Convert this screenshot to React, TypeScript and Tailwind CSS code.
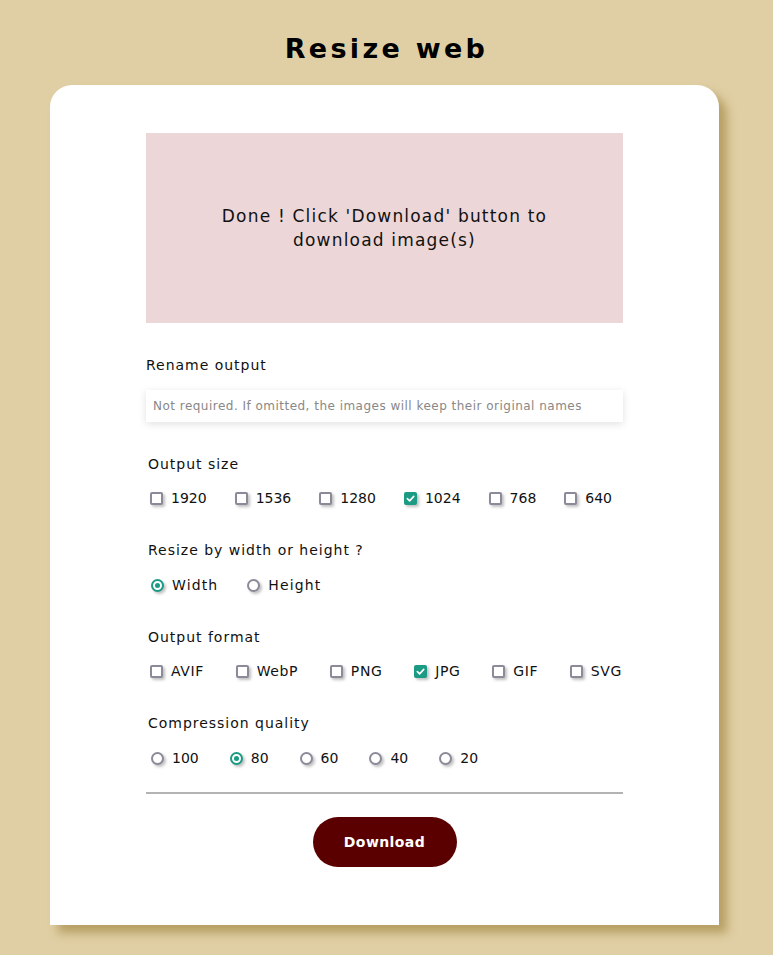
import { useState } from "react";

const sizes = ["1920", "1536", "1280", "1024", "768", "640"];
const formats = ["AVIF", "WebP", "PNG", "JPG", "GIF", "SVG"];
const qualities = ["100", "80", "60", "40", "20"];

function Box({ checked, label }: { checked: boolean; label: string }) {
  return (
    <label className="flex items-center gap-[8px] cursor-pointer">
      {checked ? (
        <span className="w-[13px] h-[13px] rounded-[2px] bg-[#1b9a84] flex items-center justify-center shadow-[2px_2px_3px_rgba(0,0,0,0.25)]">
          <svg width="9" height="9" viewBox="0 0 10 10" fill="none">
            <path d="M1.5 5.2 L4 7.6 L8.6 2.6" stroke="white" strokeWidth="1.8" strokeLinecap="round" strokeLinejoin="round" />
          </svg>
        </span>
      ) : (
        <span className="w-[13px] h-[13px] rounded-[2px] border-2 border-[#8c8a99] bg-white shadow-[2px_2px_3px_rgba(0,0,0,0.25)]" />
      )}
      <span className="text-[14px] leading-[20px] text-[#111]">{label}</span>
    </label>
  );
}

function Radio({ checked, label }: { checked: boolean; label: string }) {
  return (
    <label className="flex items-center gap-[8px] cursor-pointer">
      <span
        className={
          checked
            ? "w-[13px] h-[13px] rounded-full border-2 border-[#1b9a84] bg-white flex items-center justify-center shadow-[2px_2px_3px_rgba(0,0,0,0.25)]"
            : "w-[13px] h-[13px] rounded-full border-2 border-[#8c8a99] bg-white shadow-[2px_2px_3px_rgba(0,0,0,0.25)]"
        }
      >
        {checked && <span className="w-[5px] h-[5px] rounded-full bg-[#1b9a84]" />}
      </span>
      <span className="text-[14px] leading-[20px] text-[#111]">{label}</span>
    </label>
  );
}

export default function App() {
  const [name, setName] = useState("");
  return (
    <div
      className="min-h-[955px] bg-[#e0cfa4] pt-[30px]"
      style={{ fontFamily: "'DejaVu Sans', sans-serif" }}
    >
      <h1 className="text-center text-[27px] font-bold leading-[38px] tracking-[3.3px] text-black">
        Resize web
      </h1>
      <div className="ml-[50px] w-[669px] mt-[17px] bg-white rounded-t-[22px] shadow-[8px_8px_10px_rgba(150,120,50,0.55)] pt-[48px] pb-[58px] px-[96px]">
        <div className="h-[190px] bg-[#edd6d7] flex items-center justify-center text-center">
          <p className="text-[17px] leading-[24px] tracking-[0.07em] text-[#111] w-[400px]">
            Done ! Click 'Download' button to download image(s)
          </p>
        </div>

        <p className="mt-[32px] text-[14px] leading-[20px] tracking-[0.07em] text-[#111]">Rename output</p>
        <input
          value={name}
          onChange={(e) => setName(e.target.value)}
          placeholder="Not required. If omitted, the images will keep their original names"
          className="mt-[15px] w-full h-[32px] px-[7px] text-[12px] tracking-[0.04em] bg-white outline-none shadow-[0_2px_8px_rgba(0,0,0,0.12)] placeholder:text-[#888]"
        />

        <div className="pl-[2px]">
          <p className="mt-[32px] text-[14px] leading-[20px] tracking-[0.07em] text-[#111]">Output size</p>
          <div className="mt-[14px] flex gap-[28px] pl-[2px]">
            {sizes.map((s) => (
              <Box key={s} checked={s === "1024"} label={s} />
            ))}
          </div>

          <p className="mt-[32px] text-[14px] leading-[20px] tracking-[0.07em] text-[#111]">Resize by width or height ?</p>
          <div className="mt-[15px] flex gap-[29px] pl-[3px] tracking-[0.07em]">
            <Radio checked label="Width" />
            <Radio checked={false} label="Height" />
          </div>

          <p className="mt-[32px] text-[14px] leading-[20px] tracking-[0.07em] text-[#111]">Output format</p>
          <div className="mt-[14px] flex justify-between pl-[2px] pr-[1px] tracking-[0.04em]">
            {formats.map((f) => (
              <Box key={f} checked={f === "JPG"} label={f} />
            ))}
          </div>

          <p className="mt-[32px] text-[14px] leading-[20px] tracking-[0.07em] text-[#111]">Compression quality</p>
          <div className="mt-[15px] flex gap-[31px] pl-[3px]">
            {qualities.map((q) => (
              <Radio key={q} checked={q === "80"} label={q} />
            ))}
          </div>
        </div>

        <hr className="mt-[24px] border-0 border-t-2 border-[#b3b3b3]" />

        <div className="mt-[23px] flex justify-center">
          <button className="w-[144px] h-[50px] rounded-full bg-[#5a0000] text-white text-[14px] font-bold tracking-[0.03em]">
            Download
          </button>
        </div>
      </div>
    </div>
  );
}
